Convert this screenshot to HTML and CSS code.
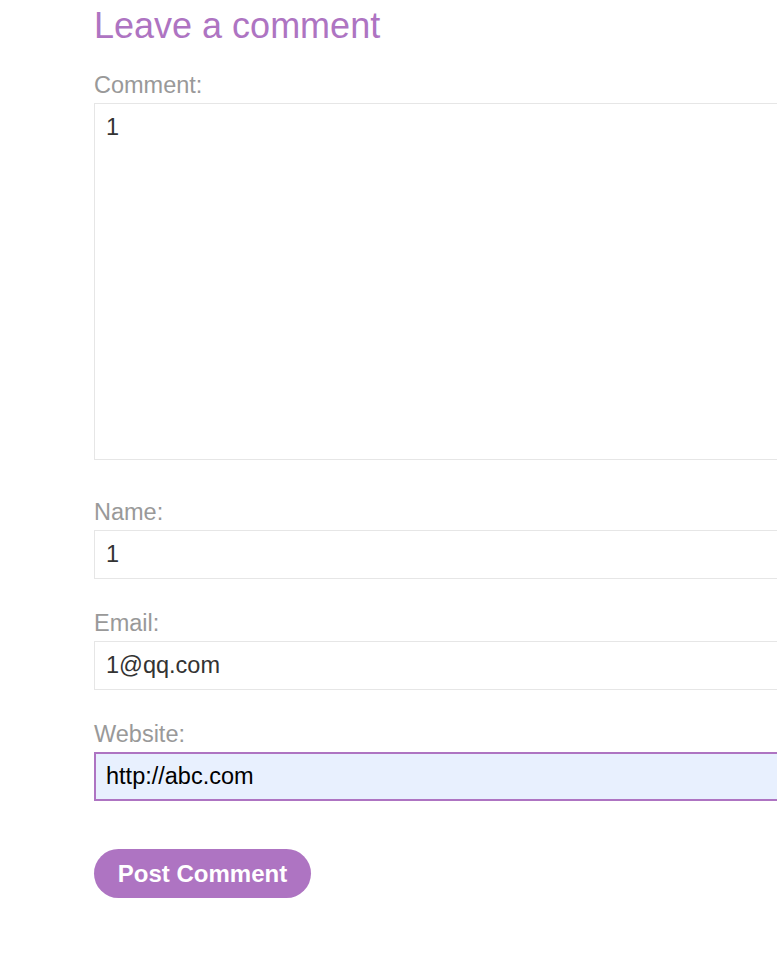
FILE: index.html
```html
<!DOCTYPE html>
<html>
<head>
<meta charset="utf-8">
<link rel="stylesheet" href="styles.css">
</head>
<body>
<section class="comment-form">
  <h2 class="title">Leave a comment</h2>
  <form class="form">
    <label class="field">
      <span class="label">Comment:</span>
      <textarea class="textarea">1</textarea>
    </label>
    <label class="field">
      <span class="label">Name:</span>
      <input class="input" type="text" value="1">
    </label>
    <label class="field">
      <span class="label">Email:</span>
      <input class="input" type="text" value="1@qq.com">
    </label>
    <label class="field">
      <span class="label">Website:</span>
      <input class="input input-active" type="text" value="http://abc.com">
    </label>
    <button class="button" type="button">Post Comment</button>
  </form>
</section>
</body>
</html>
```

FILE: styles.css
```css
html, body {
  margin: 0;
  padding: 0;
  overflow: hidden;
  background: #fff;
}
body {
  font-family: "Liberation Sans", Arial, sans-serif;
}
.comment-form {
  padding: 5px 0 0 94px;
  width: 900px;
}
.title {
  margin: 0;
  font-size: 36px;
  line-height: 42px;
  font-weight: normal;
  color: #ae74c2;
}
.form {
  display: flex;
  flex-direction: column;
  margin-top: 25px;
}
.field {
  display: flex;
  flex-direction: column;
}
.label {
  font-size: 23.5px;
  line-height: 27px;
  color: #999;
  margin-bottom: 4px;
}
.textarea, .input {
  box-sizing: border-box;
  width: 900px;
  border: 1px solid #e6e6e6;
  background: #fff;
  color: #333;
  font-family: "Liberation Sans", Arial, sans-serif;
  font-size: 23.5px;
  margin: 0;
  outline: none;
}
.textarea {
  height: 357px;
  padding: 10px 11px;
  line-height: 27px;
  resize: none;
  margin-bottom: 39px;
}
.input {
  height: 49px;
  padding: 0 11px;
  margin-bottom: 31px;
}
.input-active {
  border: 2px solid #ae74c2;
  background: #e8f0fe;
  color: #000;
  padding: 0 10px;
  margin-bottom: 48px;
}
.button {
  align-self: flex-start;
  width: 217px;
  height: 49px;
  border: none;
  border-radius: 25px;
  background: #ae74c2;
  color: #fff;
  font-family: "Liberation Sans", Arial, sans-serif;
  font-weight: bold;
  font-size: 24px;
  padding: 0;
}
```
